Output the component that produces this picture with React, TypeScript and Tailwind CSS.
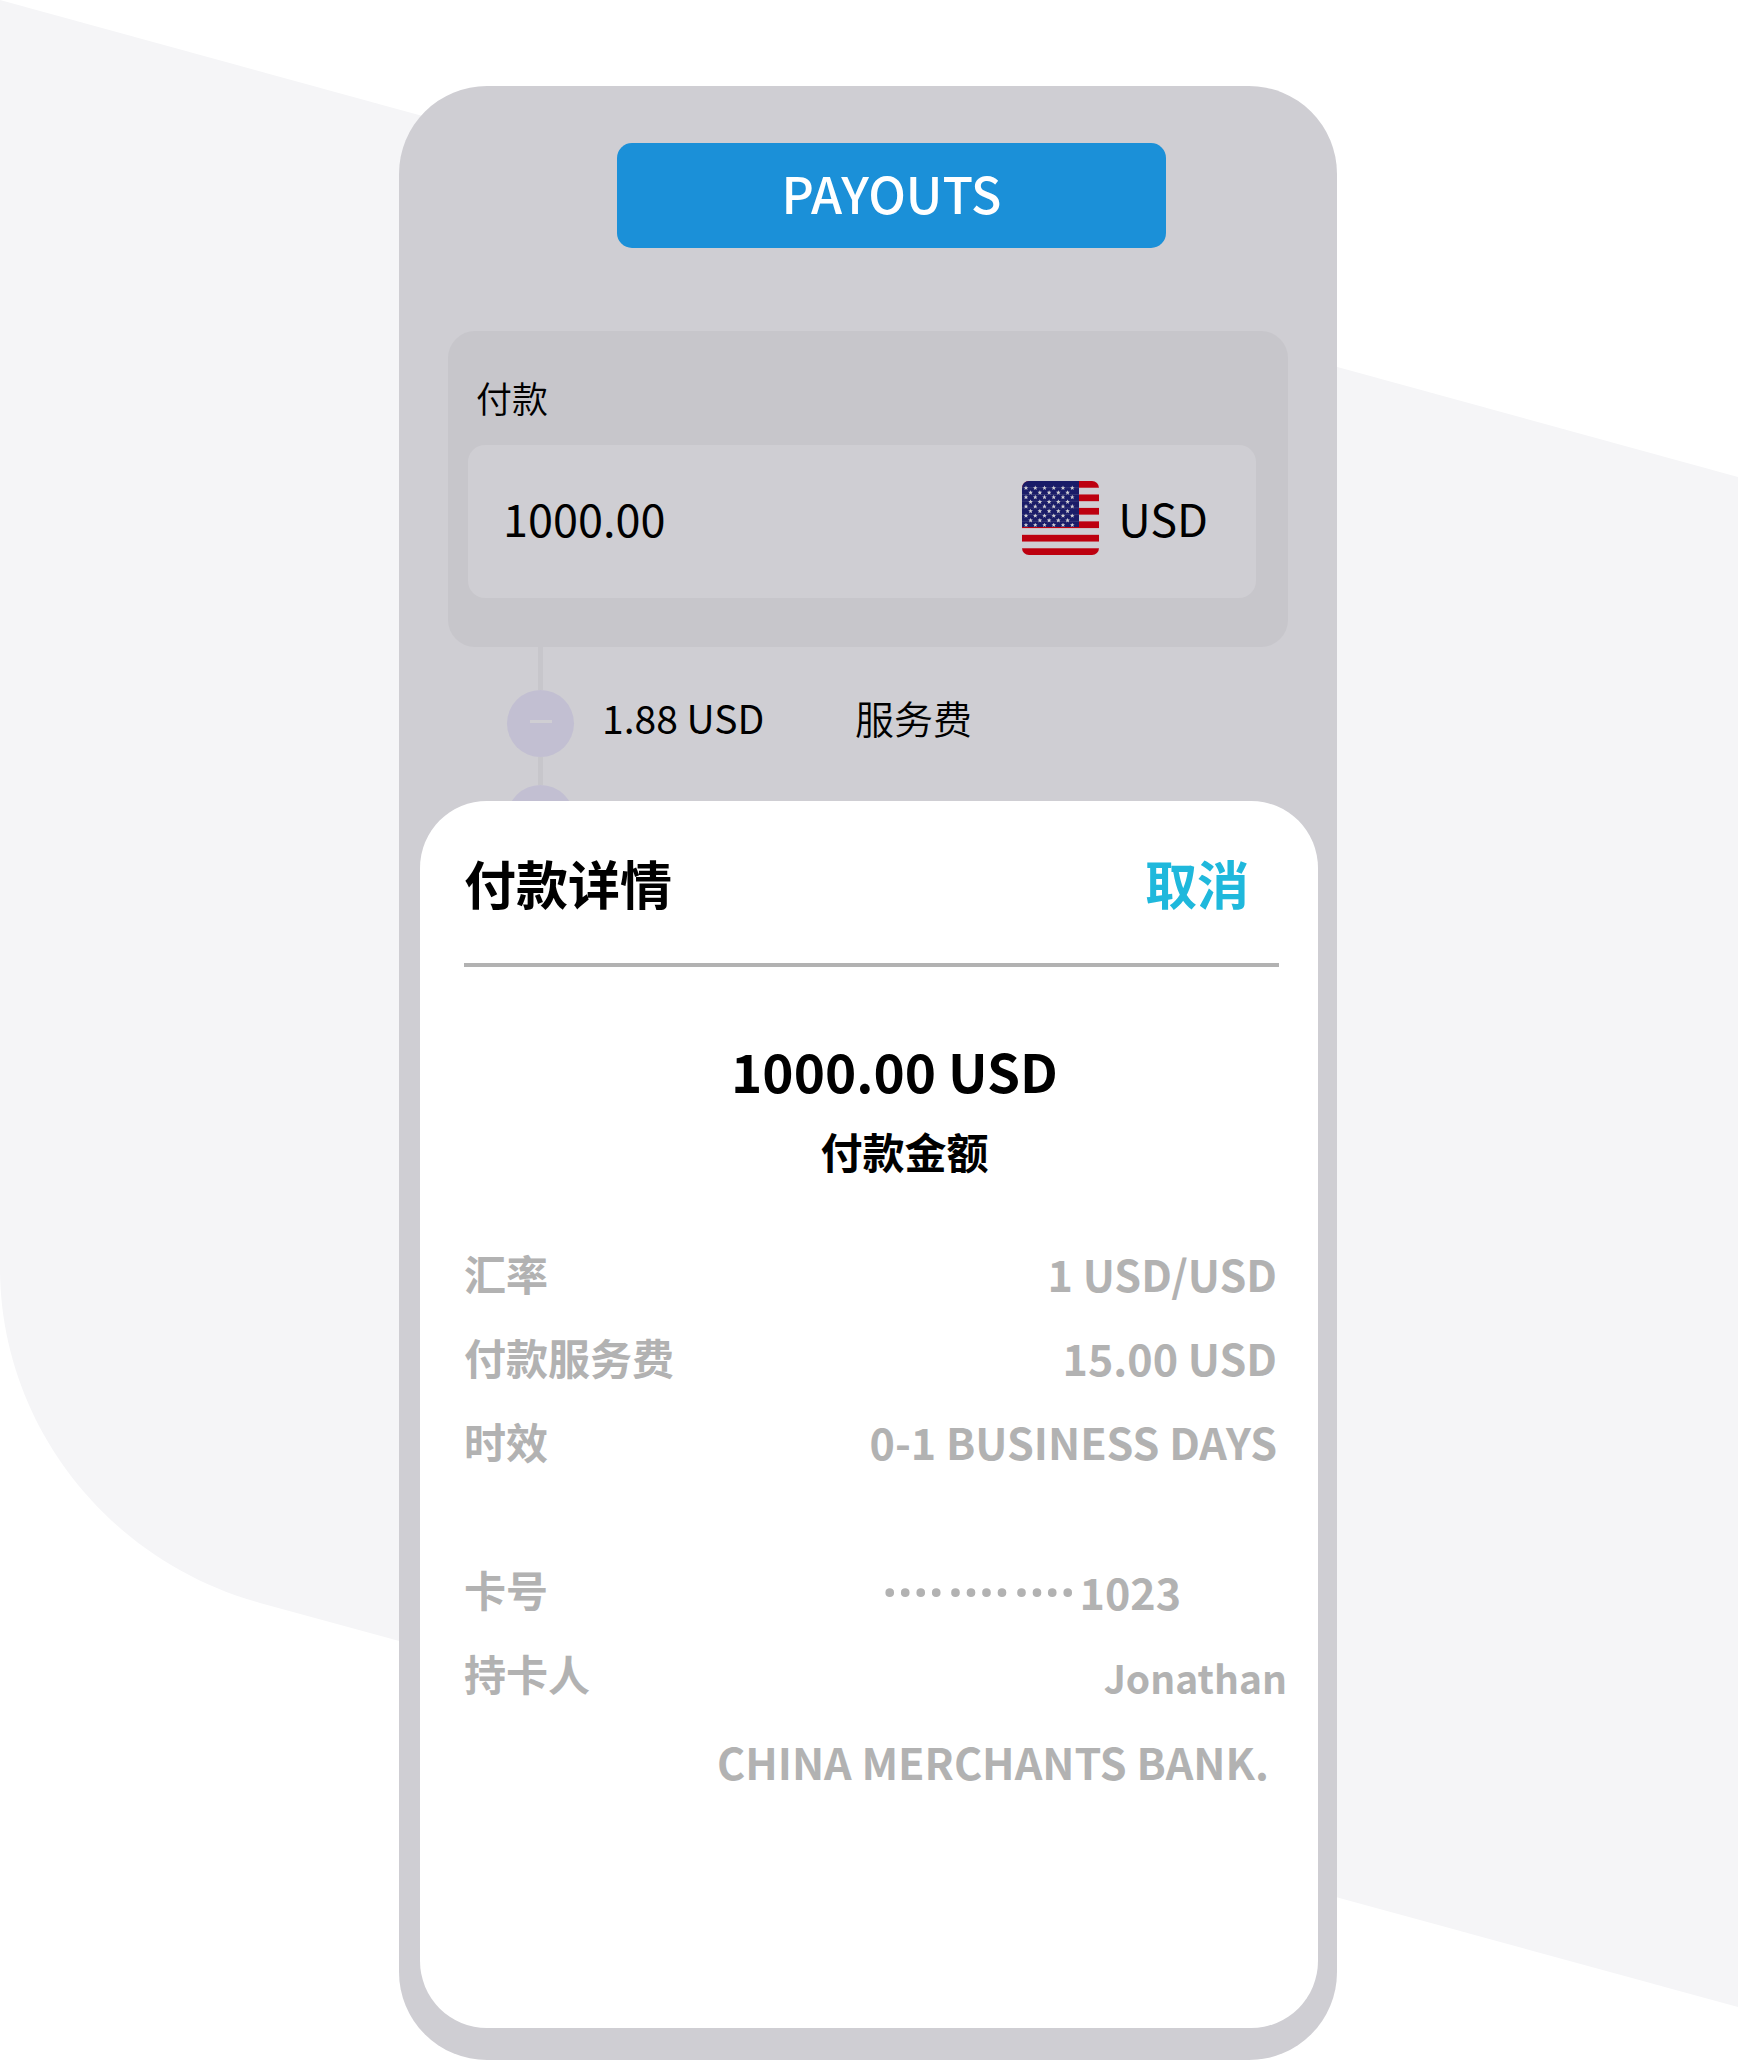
import { useState } from "react";

type DetailItem = {
  label: string;
  value: string;
}

const feeDetails: DetailItem[] = [
  { label: '汇率', value: '1 USD/USD' },
  { label: '付款服务费', value: '15.00 USD' },
  { label: '时效', value: '0-1 BUSINESS DAYS' },
]

const maskGroups = ['····', '····', '····']

function App() {
  const [amount, setAmount] = useState('1000.00');

  return (
    <div className="relative min-h-screen overflow-hidden bg-white pt-[86px] pr-0.5 font-['Noto_Sans_CJK_SC',sans-serif] text-black">
      <Backdrop />
      <main className="relative mx-auto flex min-h-[1974px] w-full max-w-[938px] flex-col rounded-[88px] bg-[#cfced3] pt-[57px] pr-[19px] pb-8 pl-[21px]">
        <button className="ml-[197px] h-[105px] w-[549px] rounded-[15px] bg-[#1b90d8] pb-2 text-[50px] leading-none font-medium text-white">
          PAYOUTS
        </button>

        <section className="mt-[83px] mr-[30px] ml-7 rounded-[27px] bg-[#c7c6cb] pt-[42px] pr-8 pb-[49px] pl-5">
          <label htmlFor="amount" className="block pl-2 text-[36px] leading-[48px] font-[350]">付款</label>
          <div className="mt-6 flex h-[153px] items-center rounded-[17px] bg-[#cfced3] pr-12 pb-2 pl-[35px]">
            <input
              id="amount"
              value={amount}
              onChange={(e) => setAmount(e.target.value)}
              className="min-w-0 flex-1 bg-transparent text-[45px] leading-[64px] outline-none"
            />
            <UsFlag />
            <span className="ml-[19px] text-[45px] leading-[64px]">USD</span>
          </div>
        </section>

        <div className="ml-[87px] flex">
          <div className="flex w-[67px] flex-col items-center">
            <div className="h-[43px] w-[5px] bg-[#c7c6cb]" />
            <div className="flex h-[67px] w-[67px] items-center justify-center rounded-full bg-[#c2bfd2] pb-1">
              <div className="h-[3px] w-[22px] bg-[#cfced3]" />
            </div>
            <div className="h-7 w-[5px] bg-[#c7c6cb]" />
            <div className="h-[67px] w-[67px] rounded-full bg-[#c2bfd2]" />
          </div>
          <div className="flex items-start pt-[42px] pl-7 text-[39px] leading-[56px]">
            <span className="w-[253px]">1.88 USD</span>
            <span className="font-[350]">服务费</span>
          </div>
        </div>

        <section className="relative -mt-[51px] flex-1 rounded-[67px] bg-white pt-11 pr-[31px] pl-11">
          <header className="mr-2 flex items-center justify-between border-b-4 border-[#b2b2b2] pr-[30px] pb-[42px] text-[52px] leading-[76px] font-bold">
            <h1>付款详情</h1>
            <button className="text-[#1fb8dc]">取消</button>
          </header>

          <div className="mt-[71px] mr-2 text-center font-bold">
            <p className="pl-[46px] text-[53px] leading-[64px]">1000.00 USD</p>
            <p className="mt-[17px] pl-[66px] text-[42px] leading-[64px]">付款金额</p>
          </div>

          <dl className="mt-12 text-[#b2b2b2]">
            {feeDetails.map((item) => (
              <DetailRow key={item.label} label={item.label}>
                <span className="pr-[10px]">{item.value}</span>
              </DetailRow>
            ))}
          </dl>

          <dl className="mt-16 text-[#b2b2b2]">
            <DetailRow label="卡号">
              <span className="flex items-center gap-1 pt-1 pr-[106px]">
                {maskGroups.map((dots, index) => (
                  <span key={index} className="font-['Noto_Sans',sans-serif] text-[56px] font-semibold">{dots}</span>
                ))}
                <span>1023</span>
              </span>
            </DetailRow>
            <DetailRow label="持卡人">
              <span className="block pt-2 text-[39px]">Jonathan</span>
            </DetailRow>
            <DetailRow label="">
              <span className="block pt-2 pr-[18px]">CHINA MERCHANTS BANK.</span>
            </DetailRow>
          </dl>
        </section>
      </main>
    </div>
  )
}

interface DetailRowProps {
  label: string;
  children: React.ReactNode;
}
function DetailRow({ label, children }: DetailRowProps) {
  return (
    <div className="flex h-[84px] items-center justify-between leading-[64px] font-bold whitespace-nowrap">
      <dt className="text-[42px]">{label}</dt>
      <dd className="text-[43px]">{children}</dd>
    </div>
  )
}

// slanted band behind the phone
function Backdrop() {
  return (
    <svg
      className="absolute inset-0 h-full w-full"
      viewBox="0 0 1738 2060"
      preserveAspectRatio="none"
      aria-hidden="true"
    >
      <path d="M0 0L1738 477V2007L260 1603C105 1560 0 1422 0 1268Z" fill="#f5f5f7" />
    </svg>
  )
}

const starPath = 'M0 -2.4L0.7 -0.8L2.3 -0.8L1 0.3L1.5 2L0 1L-1.5 2L-1 0.3L-2.3 -0.8L-0.7 -0.8Z'
const stripeHeight = 74 / 11

function UsFlag() {
  const stripes = [0, 2, 4, 6, 8, 10]
  const stars: { x: number; y: number }[] = []
  for (let row = 0; row < 9; row++) {
    const odd = row % 2 === 1
    for (let col = 0; col < (odd ? 5 : 6); col++) {
      stars.push({ x: 4 + col * 9.25 + (odd ? 4.6 : 0), y: 7 + row * 4.63 })
    }
  }

  return (
    <svg width="77" height="74" viewBox="0 0 77 74" className="shrink-0 rounded-[7px]" role="img" aria-label="US">
      {stripes.map((n) => (
        <rect key={n} x="0" y={n * stripeHeight} width="77" height={stripeHeight} fill="#bd000f" />
      ))}
      <rect width="57" height="46" fill="#1a1c68" />
      {[1, 2, 3, 4, 5, 6].map((n) => (
        <rect key={n} y={n * stripeHeight - 0.5} width="57" height="1" fill="#cfced3" opacity="0.15" />
      ))}
      {stars.map((s, index) => (
        <path key={index} d={starPath} transform={`translate(${s.x} ${s.y})`} fill="#cfced3" />
      ))}
    </svg>
  )
}

export default App;
